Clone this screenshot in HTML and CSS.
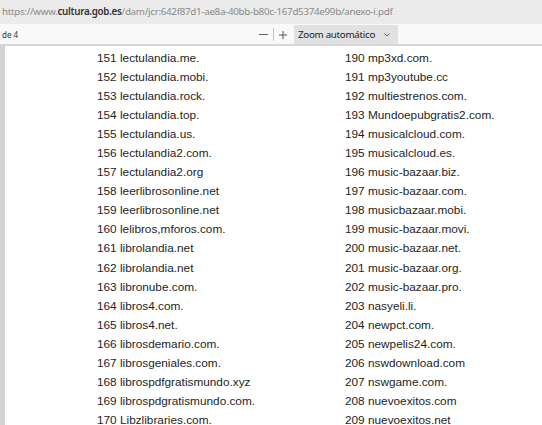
FILE: index.html
```html
<!DOCTYPE html>
<html>
<head>
<meta charset="utf-8">
<link rel="stylesheet" href="styles.css">
</head>
<body>
<div class="urlbar"><span class="dim">https://www.</span><span class="host">cultura.gob.es</span><span class="dim">/dam/jcr:642f87d1-ae8a-40bb-b80c-167d5374e99b/anexo-i.pdf</span></div>
<div class="toolbar">
  <span class="pages">de 4</span>
  <div class="zoomctl">
    <svg class="icon minus" width="9" height="9" viewBox="0 0 9 9"><path d="M0 4.5 H9" stroke="#666" stroke-width="1"/></svg>
    <span class="sep"></span>
    <svg class="icon plus" width="8" height="8" viewBox="0 0 8 8"><path d="M0 4 H8 M4 0 V8" stroke="#555" stroke-width="1"/></svg>
    <div class="select"><span class="label">Zoom automático</span><svg class="chev" width="6" height="4" viewBox="0 0 6 4"><path d="M0.5 0.5 L3 3 L5.5 0.5" fill="none" stroke="#666" stroke-width="1"/></svg></div>
  </div>
</div>
<div class="viewer">
  <div class="strip"></div>
  <div class="page">
    <ul class="col left">
      <li>151 lectulandia.me.</li>
      <li>152 lectulandia.mobi.</li>
      <li>153 lectulandia.rock.</li>
      <li>154 lectulandia.top.</li>
      <li>155 lectulandia.us.</li>
      <li>156 lectulandia2.com.</li>
      <li>157 lectulandia2.org</li>
      <li>158 leerlibrosonline.net</li>
      <li>159 leerlibrosonline.net</li>
      <li>160 lelibros,mforos.com.</li>
      <li>161 librolandia.net</li>
      <li>162 librolandia.net</li>
      <li>163 libronube.com.</li>
      <li>164 libros4.com.</li>
      <li>165 libros4.net.</li>
      <li>166 librosdemario.com.</li>
      <li>167 librosgeniales.com.</li>
      <li>168 librospdfgratismundo.xyz</li>
      <li>169 librospdgratismundo.com.</li>
      <li>170 Libzlibraries.com.</li>
    </ul>
    <ul class="col right">
      <li>190 mp3xd.com.</li>
      <li>191 mp3youtube.cc</li>
      <li>192 multiestrenos.com.</li>
      <li>193 Mundoepubgratis2.com.</li>
      <li>194 musicalcloud.com.</li>
      <li>195 musicalcloud.es.</li>
      <li>196 music-bazaar.biz.</li>
      <li>197 music-bazaar.com.</li>
      <li>198 musicbazaar.mobi.</li>
      <li>199 music-bazaar.movi.</li>
      <li>200 music-bazaar.net.</li>
      <li>201 music-bazaar.org.</li>
      <li>202 music-bazaar.pro.</li>
      <li>203 nasyeli.li.</li>
      <li>204 newpct.com.</li>
      <li>205 newpelis24.com.</li>
      <li>206 nswdownload.com</li>
      <li>207 nswgame.com.</li>
      <li>208 nuevoexitos.com</li>
      <li>209 nuevoexitos.net</li>
    </ul>
  </div>
</div>
</body>
</html>
```

FILE: styles.css
```css
html, body {
  margin: 0;
  padding: 0;
  width: 542px;
  height: 425px;
  overflow: hidden;
  background: #fff;
}
.urlbar {
  height: 24px;
  background: #ebebeb;
  font-family: "Noto Sans", "Open Sans", sans-serif;
  font-size: 9.8px;
  letter-spacing: -0.3px;
  line-height: 24px;
  padding-left: 2px;
  white-space: nowrap;
  border-bottom: 1px solid #fafafa;
}
.urlbar .dim { color: #8a8a8a; }
.urlbar .host { color: #333; font-weight: 600; }
.toolbar {
  height: 19px;
  background: #f9f9f9;
  border-bottom: 2px solid #d6d6d6;
  display: flex;
  align-items: center;
}
.pages {
  font-family: "Noto Sans", sans-serif;
  font-size: 8px;
  color: #333;
  padding-left: 2px;
  width: 20px;
  white-space: nowrap;
}
.zoomctl {
  display: flex;
  align-items: center;
  margin-left: 237px;
  height: 19px;
}
.icon { display: block; flex: none; }
.sep {
  width: 1px;
  height: 13px;
  background: #c4c4c4;
  margin: 0 5px;
}
.plus { margin-right: 7px; }
.select {
  width: 104px;
  height: 19px;
  background: #e1e1e1;
  display: flex;
  align-items: center;
  font-family: "Noto Sans", sans-serif;
  font-size: 9.8px;
  letter-spacing: -0.3px;
  color: #222;
  box-sizing: border-box;
  padding-left: 4px;
  white-space: nowrap;
}
.select .chev { margin-left: auto; margin-right: 8px; flex: none; }
.viewer {
  display: flex;
  height: 380px;
}
.strip {
  width: 5px;
  background: #d4d4d4;
}
.page {
  flex: 1;
  display: flex;
  padding-top: 3px;
}
.col {
  list-style: none;
  margin: 0;
  padding: 0;
  font-family: "Liberation Sans", Arial, sans-serif;
  font-size: 11.8px;
  line-height: 19.05px;
  color: #1e1e1e;
  white-space: nowrap;
}
.col.left { margin-left: 92px; width: 248px; }
```
